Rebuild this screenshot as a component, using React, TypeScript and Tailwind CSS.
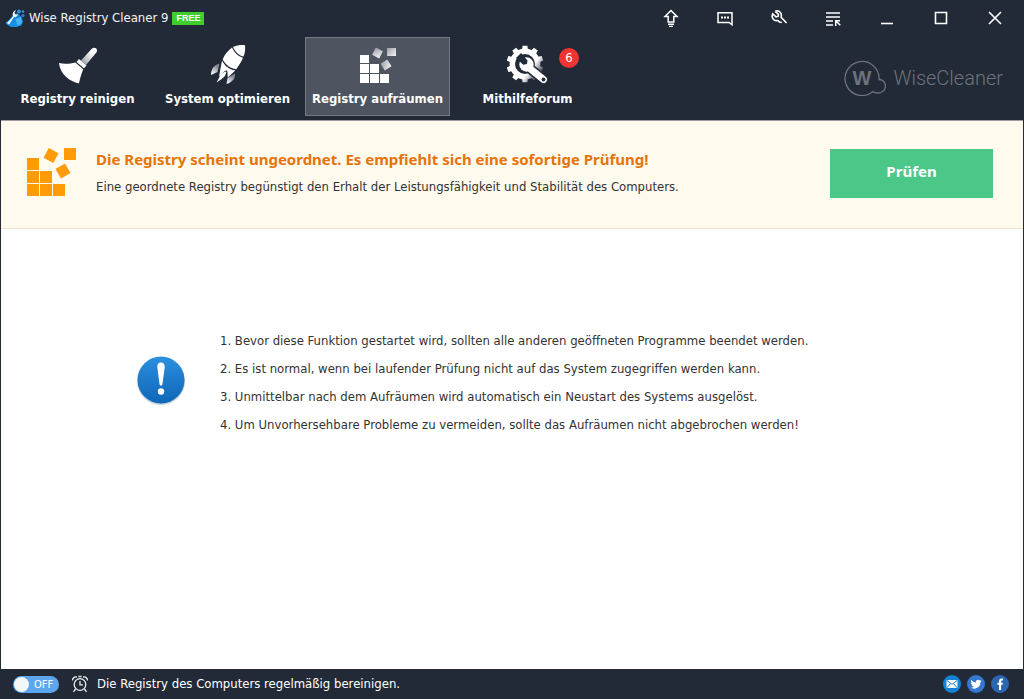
import React, { useState } from 'react';

const tips = [
  '1. Bevor diese Funktion gestartet wird, sollten alle anderen geöffneten Programme beendet werden.',
  '2. Es ist normal, wenn bei laufender Prüfung nicht auf das System zugegriffen werden kann.',
  '3. Unmittelbar nach dem Aufräumen wird automatisch ein Neustart des Systems ausgelöst.',
  '4. Um Unvorhersehbare Probleme zu vermeiden, sollte das Aufräumen nicht abgebrochen werden!',
];

function AppIcon() {
  return (
    <svg width="20" height="20" viewBox="0 0 20 20" aria-hidden="true">
      <path d="M7 8l5-3 5 4 1 5-2 4H6l-5-3 3-3z" fill="#1583dc" />
      <path d="M1 14l6-2 5 3 1 4H6l-5-3z" fill="#1a8fe6" />
      <path d="M10 11l6-2 1 6-4 3z" fill="#43b5f3" />
      <circle cx="14" cy="3.500" r="2" fill="#299be9" />
      <circle cx="18" cy="3.500" r="1.2" fill="#2f9deb" />
      <circle cx="18" cy="7.500" r="1.500" fill="#1f8be0" />
      <path d="M2 15L8 8.500C7 5.500 8 3 11 2l-1.500 3 1.500 1.700 2-.7c-.5 2.500-2 3.300-3.800 3L4 16.500z" fill="#e4f4fd" />
    </svg>
  );
}

function BroomIcon() {
  return (
    <svg width="40" height="38" viewBox="0 0 40 38" aria-hidden="true">
      <defs>
        <linearGradient id="handle" x1="1" y1="0" x2="0" y2="1">
          <stop offset="0.3" stopColor="#fff" />
          <stop offset="1" stopColor="#8b909a" />
        </linearGradient>
      </defs>
      <path d="M23 14.500L34 2.600c2.800-2.600 6.800.8 4.300 4L28 19z" fill="url(#handle)" />
      <path d="M21 13l7.500 6.500-2.500 2.800-7.500-6.200z" fill="#fff" />
      <path d="M1 17c6 1.300 11.500.6 16.300-.6l8 6.800c-1.600 4-3.300 8.500-4.300 14.300C12 35.500 2 28.500 1 17z" fill="#fff" />
    </svg>
  );
}

function RocketIcon() {
  return (
    <svg width="36" height="40" viewBox="0 0 36 40" aria-hidden="true">
      <defs>
        <linearGradient id="fin" x1="0.8" y1="0" x2="0.2" y2="1">
          <stop offset="0.2" stopColor="#80858f" />
          <stop offset="1" stopColor="#fff" />
        </linearGradient>
      </defs>
      <path d="M9.500 18.500C4 20 1 24 1 30l6.500-3z" fill="url(#fin)" />
      <path d="M25 28.500c.5 5-2.500 8.500-8.500 10.500l1-6z" fill="url(#fin)" />
      <path d="M23 2C27 .3 31-.2 35 .2c.4 4 0 8-1.500 11.300C30.500 11.300 25 7.500 23 2z" fill="#fff" />
      <path d="M22 2.500c2 5 6.200 9 11 10.200-1.600 4-4 7.500-6.800 11.500-6-.8-11-4.500-13.500-10C14.700 9.500 18 5.500 22 2.500z" fill="#fff" />
      <path d="M12 15.500C14.500 20.500 19 24.700 25.300 25.500l-7.500 7c-.5-2.500.2-5-.8-7.200-3 .5-5 3.500-8 6.500z" fill="#fff" />
      <path d="M16.200 26.500c.3 3-2 5.800-4.500 7.500L6.500 37.500 9 33c1-3 3.700-6 7.200-6.500z" fill="#fff" />
    </svg>
  );
}

function BlocksIcon() {
  return (
    <svg width="36" height="36" viewBox="0 0 36 36" aria-hidden="true">
      <defs>
        <linearGradient id="block" x1="0" y1="0" x2="1" y2="1">
          <stop offset="0" stopColor="#989ca4" />
          <stop offset="1" stopColor="#f8f8f9" />
        </linearGradient>
      </defs>
      <path d="M0 8h9v8H0zM0 17h9v9H0zM0 27h9v9H0zM10 17h9v9h-9zM10 27h9v9h-9zM20 27h9v9h-9z" fill="#fff" />
      <g fill="url(#block)">
        <rect x="27" y="1" width="9" height="8" />
        <rect x="13.500" y="2" width="8" height="8" transform="rotate(28 17.500 6)" />
        <rect x="22" y="14" width="8" height="8" transform="rotate(-32 26 18)" />
      </g>
    </svg>
  );
}

const gearTeeth = [18, 54, 90, 126, 162, 198, 234, 270, 306, 342];

function GearIcon() {
  return (
    <svg width="42" height="40" viewBox="0 0 42 40" aria-hidden="true">
      <defs>
        <linearGradient id="gear" gradientUnits="userSpaceOnUse" x1="19" y1="19" x2="34" y2="30">
          <stop offset="0.35" stopColor="#fff" />
          <stop offset="0.95" stopColor="#3b424e" />
        </linearGradient>
      </defs>
      <circle cx="18" cy="19" r="12.700" fill="none" stroke="url(#gear)" strokeWidth="5.400" />
      {gearTeeth.map((deg) => {
        const a = (deg * Math.PI) / 180;
        const point = (r: number, offset: number) =>
          `${18 + r * Math.cos(a + offset)},${19 + r * Math.sin(a + offset)}`;
        return (
          <polygon
            key={deg}
            points={[point(14, -0.21), point(18.5, -0.13), point(18.5, 0.13), point(14, 0.21)].join(' ')}
            fill="url(#gear)"
          />
        );
      })}
      <path d="M21 22L37 35" stroke="#222a37" strokeWidth="10" strokeLinecap="round" />
      <circle cx="19.500" cy="19.500" r="7.200" fill="#fff" />
      <path d="M21 22L36.500 34.500" stroke="#fff" strokeWidth="7" strokeLinecap="round" />
      <path d="M9 13l5-5 6.500 7.500-.5 3.500-3.800.7z" fill="#222a37" />
      <circle cx="36.500" cy="34.500" r="1.900" fill="#222a37" />
    </svg>
  );
}

function Logo() {
  return (
    <div className="flex items-center gap-1.5 pt-0.5 text-[#6d737d]">
      <svg width="43" height="36" viewBox="0 0 43 36" fill="none" stroke="currentColor" strokeWidth="1.300" aria-hidden="true">
        <path d="M35 19.500A17 17 0 1 0 29 31.500C32 34 39 33.500 41 28.500C42.500 23.500 39.500 19.500 35 19.500Z" />
        <text x="18" y="25" textAnchor="middle" fill="currentColor" stroke="none" className="text-[20px] font-bold font-['Liberation_Sans',sans-serif]">W</text>
      </svg>
      <span className="text-[20px] leading-6 font-light font-['Roboto',sans-serif]">WiseCleaner</span>
    </div>
  );
}

const windowButtons = [
  {
    label: 'Upgrade',
    icon: (
      <g strokeWidth="1.500">
        <path d="M9 1.500L3 7.500h3.200V13h5.600V7.500H15z" />
        <path d="M6 15.200h6M7 17.500h4" />
      </g>
    ),
  },
  {
    label: 'Feedback',
    icon: (
      <g strokeWidth="1.500">
        <path d="M2 3.700h14v12l-3-2.200H2z" />
        <path d="M5 8.500h8" strokeWidth="2" strokeDasharray="2 1" />
      </g>
    ),
  },
  {
    label: 'Einstellungen',
    icon: (
      <path
        d="M5.200 2.300l3.300 3-.4 2-2.100.6-3.300-3c-.9 2.300-.4 4.600 1.300 5.900 1.300.9 2.400 1 3.700.5 M5.200 2.300c3-1.200 6.300.7 6.200 4.200l-.3 1.700 5.500 5.800M7.700 11.300l1.800 1.700 2.300.5"
        strokeWidth="1.600"
      />
    ),
  },
  {
    label: 'Menü',
    icon: (
      <g strokeWidth="1.500">
        <path d="M2 4h14M2 8h14M2 12h7M2 16h7" />
        <path d="M11.700 17v-5.200H16M12 12l4.300 4.300" />
      </g>
    ),
  },
  { label: 'Minimieren', icon: <path d="M3 14.500h12" /> },
  { label: 'Maximieren', icon: <path d="M3.500 3.500h11v11h-11z" /> },
  { label: 'Schließen', icon: <path d="M3 3l12 12M15 3L3 15" /> },
];

const navItems = [
  { label: 'Registry reinigen', icon: <BroomIcon />, badge: 0 },
  { label: 'System optimieren', icon: <RocketIcon />, badge: 0 },
  { label: 'Registry aufräumen', icon: <BlocksIcon />, badge: 0 },
  { label: 'Mithilfeforum', icon: <GearIcon />, badge: 6 },
];

function TitleBar() {
  return (
    <div className="flex h-9 items-center justify-between pr-px pl-1">
      <div className="flex items-center">
        <AppIcon />
        <h1 className="ml-1 text-[13px] leading-5 text-gray-100">Wise Registry Cleaner 9</h1>
        <span className="ml-1 bg-[#3fce2d] px-1 text-[9px] leading-[13px] font-bold text-white font-['Liberation_Sans',sans-serif]">
          FREE
        </span>
      </div>
      <div className="flex">
        {windowButtons.map((b) => (
          <button key={b.label} aria-label={b.label} className="flex h-9 w-[54px] items-center justify-center text-white">
            <svg width="18" height="18" viewBox="0 0 18 18" fill="none" stroke="currentColor" strokeWidth="1.600">
              {b.icon}
            </svg>
          </button>
        ))}
      </div>
    </div>
  );
}

function NavBar({ active, onSelect }: { active: string; onSelect: (label: string) => void }) {
  return (
    <div className="flex items-center justify-between pt-px pr-5 pb-1 pl-1">
      <nav className="flex gap-[5px]">
        {navItems.map((item) => (
          <button
            key={item.label}
            onClick={() => onSelect(item.label)}
            className={`relative flex h-[79px] w-[145px] flex-col items-center border pt-1.5 ${
              active === item.label ? 'border-[#747a84] bg-[#4e5560]' : 'border-transparent'
            }`}
          >
            <span className="flex h-[42px] items-center">{item.icon}</span>
            <span className="mt-0.5 text-[13px] leading-[22px] font-bold whitespace-nowrap text-white">{item.label}</span>
            {item.badge > 0 && (
              <span className="absolute top-2.5 right-5 flex size-5 items-center justify-center rounded-full bg-[#f03434] text-[13px] text-white">
                {item.badge}
              </span>
            )}
          </button>
        ))}
      </nav>
      <Logo />
    </div>
  );
}

function Banner() {
  return (
    <section className="flex items-center justify-between border-b border-[#f3e2c6] bg-[#fefaed] pt-6 pr-[30px] pb-[27px] pl-[26px]">
      <div className="flex items-center">
        <svg width="50" height="50" viewBox="0 0 50 50" fill="#ff9b07" aria-hidden="true">
          <path d="M0 10h12v12H0zM0 23h12v12H0zM0 36h12v12H0zM13 23h12v12H13zM13 36h12v12H13zM26 36h12v12H26z" />
          <rect x="37" y="0" width="12" height="12" />
          <rect x="18.500" y="2" width="11" height="11" transform="rotate(28 24 7.500)" />
          <rect x="30.500" y="17.500" width="11" height="11" transform="rotate(-30 36 23)" />
        </svg>
        <div className="ml-[19px]">
          <h2 className="text-[15px] leading-7 font-bold text-[#e6740c] font-['Noto_Sans',sans-serif]">
            Die Registry scheint ungeordnet. Es empfiehlt sich eine sofortige Prüfung!
          </h2>
          <p className="text-[13px] leading-7 text-[#333]">
            Eine geordnete Registry begünstigt den Erhalt der Leistungsfähigkeit und Stabilität des Computers.
          </p>
        </div>
      </div>
      <button className="h-[49px] w-[163px] shrink-0 bg-[#4bc788] pb-1 text-[15px] font-bold text-white font-['Noto_Sans',sans-serif]">
        Prüfen
      </button>
    </section>
  );
}

function Tips() {
  return (
    <main className="flex grow items-start bg-white pt-[98px] pl-[135px]">
      <svg className="mt-7 shrink-0" width="50" height="52" viewBox="0 0 50 52" aria-hidden="true">
        <defs>
          <linearGradient id="info" x1="0" y1="0" x2="0" y2="1">
            <stop offset="0" stopColor="#2c8fdf" />
            <stop offset="1" stopColor="#0f66b8" />
          </linearGradient>
        </defs>
        <circle cx="25" cy="26" r="24" fill="#c5d0da" />
        <circle cx="25" cy="25" r="23.500" fill="url(#info)" />
        <path d="M25 7.500c2.600 0 3.900 1.800 3.700 4.500L26.500 29c-.3 2-2.700 2-3 0L21.300 12c-.2-2.700 1.100-4.500 3.700-4.500z" fill="#fff" />
        <circle cx="25" cy="36.500" r="3.200" fill="#fff" />
      </svg>
      <ol className="ml-[34px] text-[13px] leading-7 text-[#333]">
        {tips.map((tip) => (
          <li key={tip}>{tip}</li>
        ))}
      </ol>
    </main>
  );
}

function StatusBar() {
  const [enabled, setEnabled] = useState(false);

  return (
    <footer className="flex h-[30px] items-center justify-between pr-[14px] pl-3">
      <label className="flex cursor-pointer items-center">
        <input type="checkbox" className="sr-only" checked={enabled} onChange={(e) => setEnabled(e.target.checked)} />
        <span className={`flex h-[17px] w-[46px] items-center rounded-full bg-[#5ca6ee] px-px text-white ${enabled ? 'flex-row-reverse' : ''}`}>
          <span className="size-[15px] rounded-full bg-[#f4f6f8]" />
          <span className="grow pt-px text-center text-[11px] leading-4">{enabled ? 'ON' : 'OFF'}</span>
        </span>
        <svg className="ml-3" width="18" height="18" viewBox="0 0 18 18" fill="none" stroke="#eceef0" strokeWidth="1.300" aria-hidden="true">
          <circle cx="9" cy="9.500" r="5.800" />
          <path d="M9 6v3.800h3M1.500 5.500C1.500 3 3.500 1.500 6 2M16.500 5.500c0-2.500-2-4-4.500-3.500M4.500 14l-2 2.800M13.500 14l2 2.800M7.500 1.500h3" />
        </svg>
        <span className="ml-2 text-[13px] leading-5 text-white">Die Registry des Computers regelmäßig bereinigen.</span>
      </label>
      <div className="flex gap-1.5">
        <a href="#mail" aria-label="E-Mail">
          <svg width="18" height="18" viewBox="0 0 18 18">
            <circle cx="9" cy="9" r="9" fill="#1483d6" />
            <path d="M3.500 5h11v8h-11z" fill="#fff" />
            <path d="M3.500 5L9 9.500 14.500 5M3.500 13l4-4.500M14.500 13l-4-4.500" fill="none" stroke="#1483d6" />
          </svg>
        </a>
        <a href="#twitter" aria-label="Twitter">
          <svg width="18" height="18" viewBox="0 0 18 18">
            <circle cx="9" cy="9" r="9" fill="#3279cf" />
            <path
              d="M14.500 5.700c-.4.200-.9.300-1.300.4.500-.3.800-.7 1-1.200-.4.200-.9.400-1.400.5a2.300 2.300 0 0 0-3.900 2.100A6.400 6.400 0 0 1 4.200 5.100a2.300 2.300 0 0 0 .7 3c-.4 0-.7-.1-1-.3 0 1.100.8 2.100 1.800 2.300-.3.100-.7.100-1 0 .3.900 1.100 1.600 2.100 1.600a4.600 4.600 0 0 1-3.300.9 6.400 6.400 0 0 0 9.900-5.700c.4-.3.800-.7 1.100-1.200z"
              fill="#fff"
            />
          </svg>
        </a>
        <a href="#facebook" aria-label="Facebook">
          <svg width="18" height="18" viewBox="0 0 18 18">
            <circle cx="9" cy="9" r="9" fill="#2c66b1" />
            <path d="M8 15V9.800H6.500V7.700H8V6.300C8 4.300 9 3.500 10.500 3.500h1.400v2h-1c-.6 0-.8.300-.8.900v1.300h1.800l-.3 2.100h-1.500V15z" fill="#fff" />
          </svg>
        </a>
      </div>
    </footer>
  );
}

export default function App() {
  const [active, setActive] = useState('Registry aufräumen');

  return (
    <div className="flex min-h-screen flex-col bg-[#222a37] px-px font-['DejaVu_Sans_Condensed','Noto_Sans',sans-serif]">
      <header className="border-b border-[#a09ca4]">
        <TitleBar />
        <NavBar active={active} onSelect={setActive} />
      </header>
      <Banner />
      <Tips />
      <StatusBar />
    </div>
  );
}
